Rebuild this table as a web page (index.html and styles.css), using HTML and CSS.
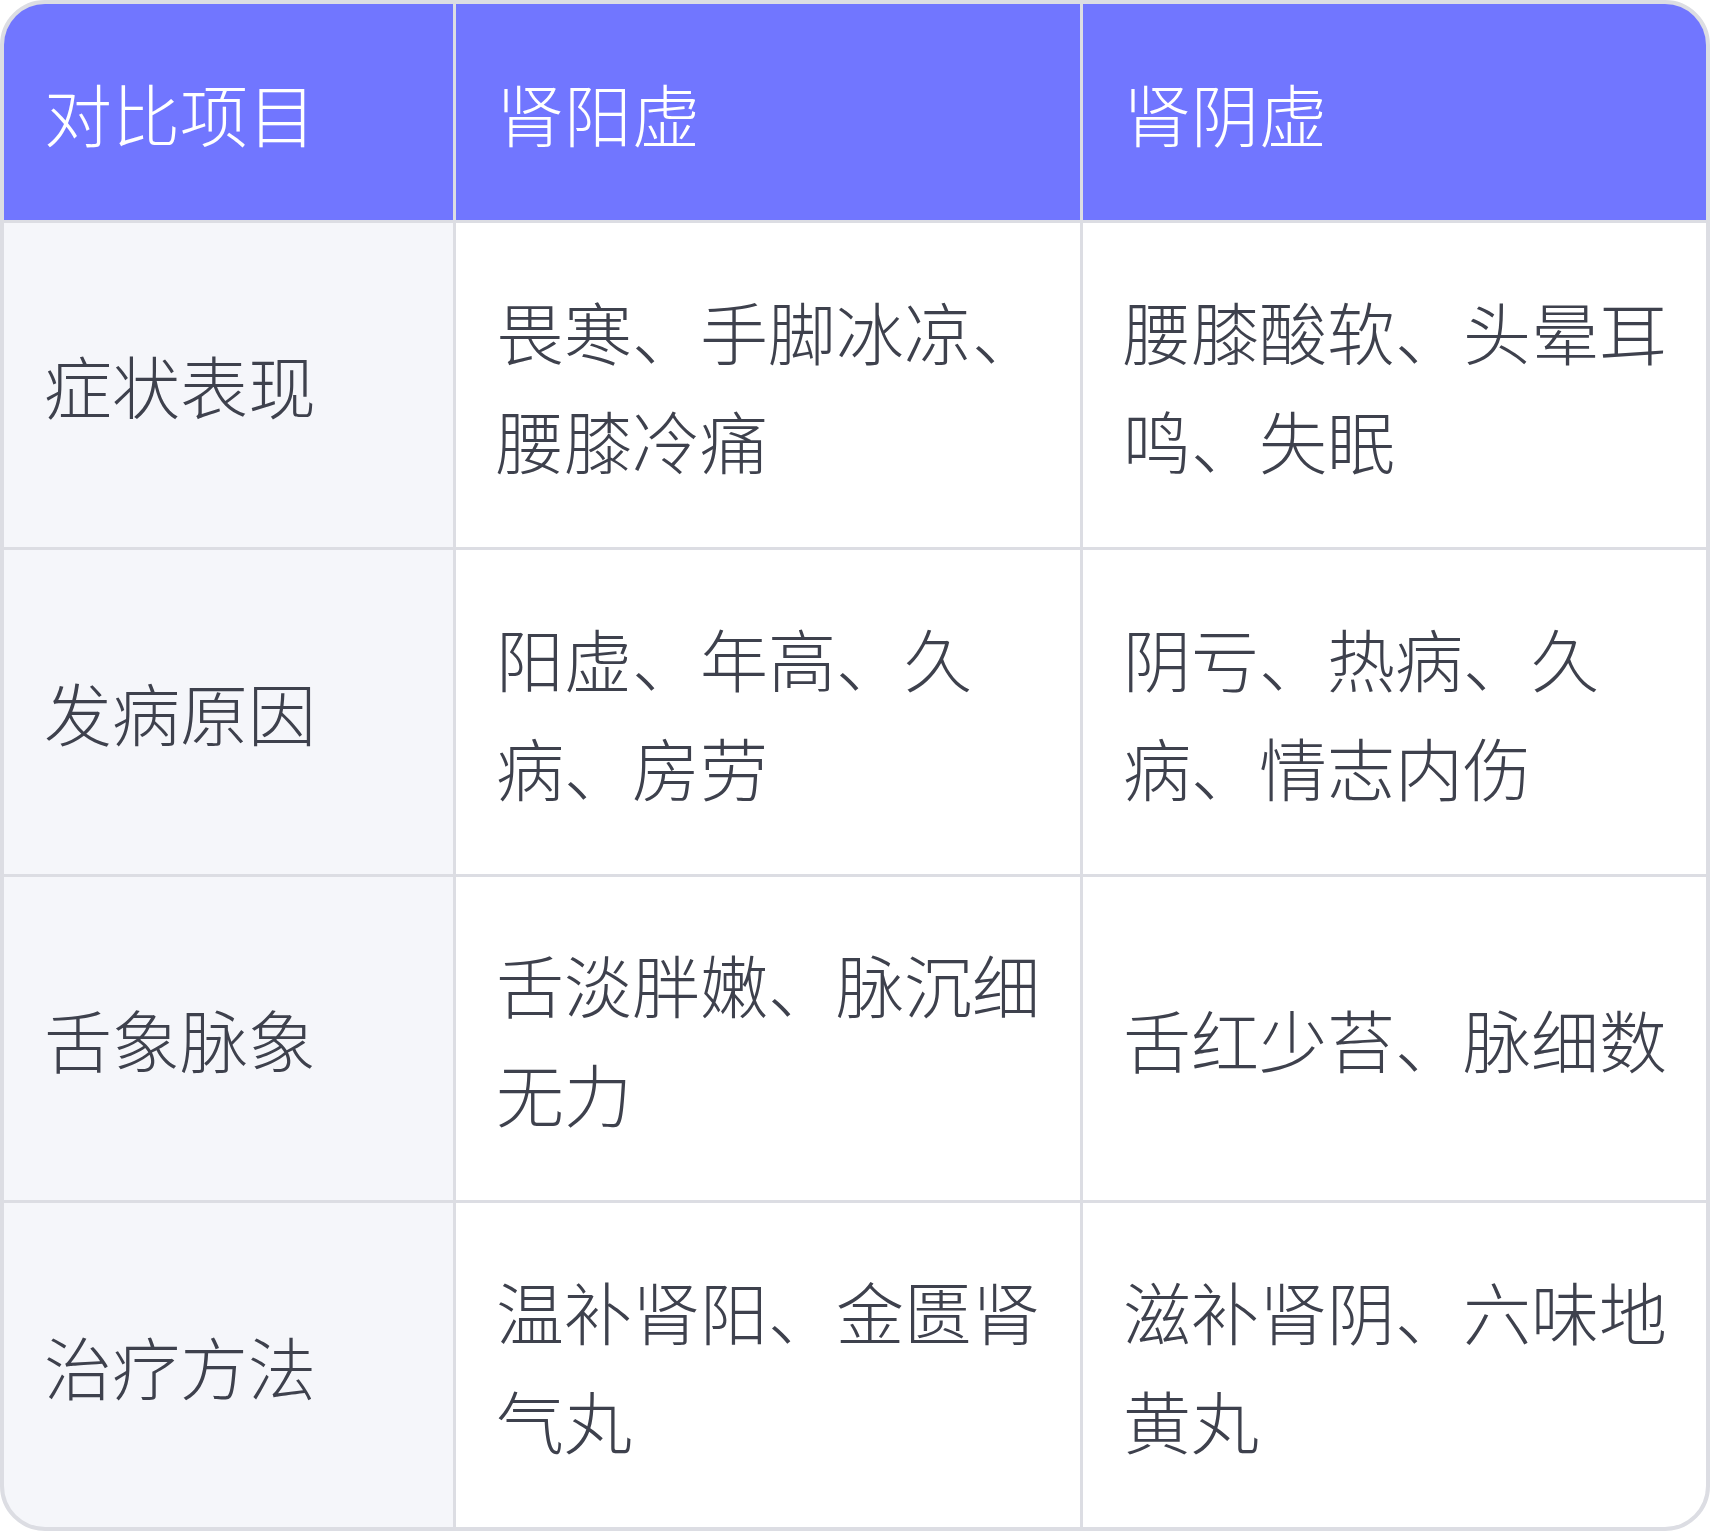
FILE: index.html
```html
<!DOCTYPE html>
<html lang="zh-CN">
<head>
<meta charset="utf-8">
<title>肾阳虚与肾阴虚对比</title>
<link rel="stylesheet" href="styles.css">
</head>
<body>
<div class="compare">
  <div class="cell head">对比项目</div>
  <div class="cell head">肾阳虚</div>
  <div class="cell head">肾阴虚</div>

  <div class="cell label">症状表现</div>
  <div class="cell">畏寒、手脚冰凉、腰膝冷痛</div>
  <div class="cell">腰膝酸软、头晕耳鸣、失眠</div>

  <div class="cell label">发病原因</div>
  <div class="cell">阳虚、年高、久病、房劳</div>
  <div class="cell">阴亏、热病、久病、情志内伤</div>

  <div class="cell label">舌象脉象</div>
  <div class="cell">舌淡胖嫩、脉沉细无力</div>
  <div class="cell">舌红少苔、脉细数</div>

  <div class="cell label">治疗方法</div>
  <div class="cell">温补肾阳、金匮肾气丸</div>
  <div class="cell">滋补肾阴、六味地黄丸</div>
</div>
</body>
</html>
```
FILE: styles.css
```css
html, body {
  margin: 0;
  padding: 0;
  background: #ffffff;
}

.compare {
  box-sizing: border-box;
  width: 1710px;
  height: 1531px;
  display: grid;
  grid-template-columns: 449px 624px 1fr;
  grid-template-rows: 216px 1fr 1fr 1fr 1fr;
  gap: 3px;
  border: 4px solid #dcdde3;
  border-radius: 45px;
  background: #dcdde3;
  overflow: hidden;
  font-family: "Noto Sans CJK SC", "Noto Sans", sans-serif;
  font-weight: 300;
  font-size: 68px;
  line-height: 109px;
  color: #3e414d;
}

.cell {
  display: flex;
  align-items: center;
  padding: 0 30px 0 40px;
  background: #ffffff;
  word-break: break-all;
}

.head {
  background: #7176ff;
  color: #ffffff;
}

.label {
  background: #f5f6fa;
}
```
